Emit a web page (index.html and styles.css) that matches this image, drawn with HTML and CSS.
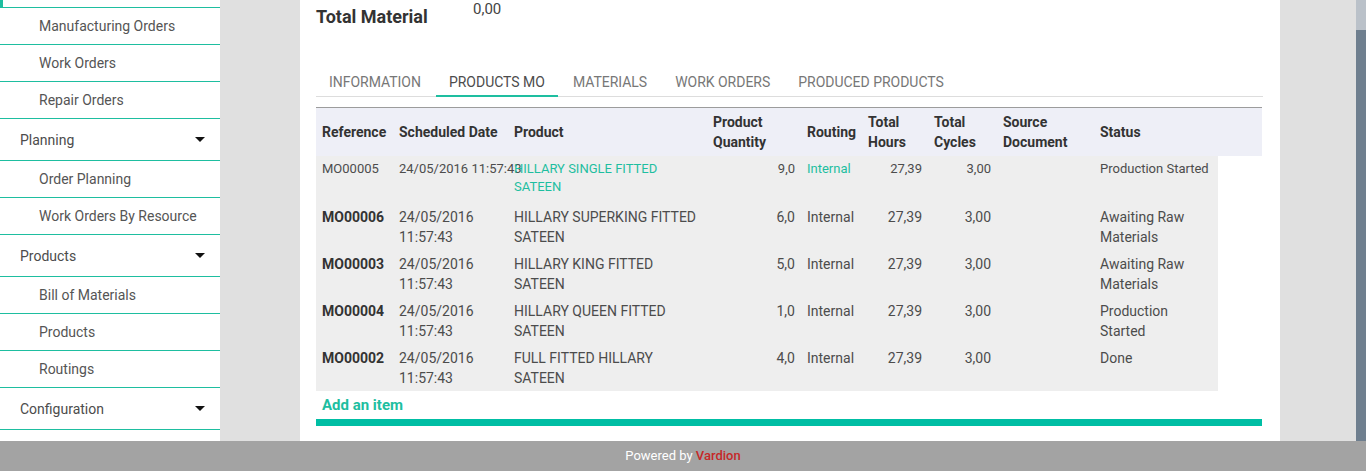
FILE: index.html
```html
<!DOCTYPE html>
<html>
<head>
<meta charset="utf-8">
<link rel="stylesheet" href="styles.css">
</head>
<body>
<div class="app">
  <div class="main">
    <nav class="sidebar">
      <div class="menu">
        <div class="item clipped"></div>
        <div class="item sub">Manufacturing Orders</div>
        <div class="item sub">Work Orders</div>
        <div class="item sub">Repair Orders</div>
        <div class="item top">Planning <span class="caret"></span></div>
        <div class="item sub">Order Planning</div>
        <div class="item sub">Work Orders By Resource</div>
        <div class="item top">Products <span class="caret"></span></div>
        <div class="item sub">Bill of Materials</div>
        <div class="item sub">Products</div>
        <div class="item sub">Routings</div>
        <div class="item top">Configuration <span class="caret"></span></div>
      </div>
    </nav>
    <div class="content">
      <div class="sheet">
        <div class="total">
          <div class="total-label">Total Material</div>
          <div class="total-value">0,00</div>
        </div>
        <div class="tabs">
          <div class="tab">INFORMATION</div>
          <div class="tab active">PRODUCTS MO</div>
          <div class="tab">MATERIALS</div>
          <div class="tab">WORK ORDERS</div>
          <div class="tab">PRODUCED PRODUCTS</div>
        </div>
        <div class="thead">
          <div class="th">Reference</div>
          <div class="th">Scheduled Date</div>
          <div class="th">Product</div>
          <div class="th">Product<br>Quantity</div>
          <div class="th">Routing</div>
          <div class="th">Total<br>Hours</div>
          <div class="th">Total<br>Cycles</div>
          <div class="th">Source<br>Document</div>
          <div class="th">Status</div>
        </div>
        <div class="tbody">
          <div class="row small">
            <div class="td">MO00005</div>
            <div class="td nowrap">24/05/2016 11:57:43</div>
            <div class="td link">HILLARY SINGLE FITTED SATEEN</div>
            <div class="td num">9,0</div>
            <div class="td link">Internal</div>
            <div class="td num">27,39</div>
            <div class="td num">3,00</div>
            <div class="td"></div>
            <div class="td nowrap">Production Started</div>
          </div>
          <div class="row">
            <div class="td ref">MO00006</div>
            <div class="td">24/05/2016 11:57:43</div>
            <div class="td">HILLARY SUPERKING FITTED SATEEN</div>
            <div class="td num">6,0</div>
            <div class="td">Internal</div>
            <div class="td num">27,39</div>
            <div class="td num">3,00</div>
            <div class="td"></div>
            <div class="td">Awaiting Raw Materials</div>
          </div>
          <div class="row">
            <div class="td ref">MO00003</div>
            <div class="td">24/05/2016 11:57:43</div>
            <div class="td">HILLARY KING FITTED SATEEN</div>
            <div class="td num">5,0</div>
            <div class="td">Internal</div>
            <div class="td num">27,39</div>
            <div class="td num">3,00</div>
            <div class="td"></div>
            <div class="td">Awaiting Raw Materials</div>
          </div>
          <div class="row">
            <div class="td ref">MO00004</div>
            <div class="td">24/05/2016 11:57:43</div>
            <div class="td">HILLARY QUEEN FITTED SATEEN</div>
            <div class="td num">1,0</div>
            <div class="td">Internal</div>
            <div class="td num">27,39</div>
            <div class="td num">3,00</div>
            <div class="td"></div>
            <div class="td">Production Started</div>
          </div>
          <div class="row">
            <div class="td ref">MO00002</div>
            <div class="td">24/05/2016 11:57:43</div>
            <div class="td">FULL FITTED HILLARY SATEEN</div>
            <div class="td num">4,0</div>
            <div class="td">Internal</div>
            <div class="td num">27,39</div>
            <div class="td num">3,00</div>
            <div class="td"></div>
            <div class="td">Done</div>
          </div>
        </div>
        <div class="add-item">Add an item</div>
        <div class="teal-bar"></div>
      </div>
      <div class="scrollbar"><div class="thumb"></div></div>
    </div>
  </div>
  <footer class="footer">Powered by <span class="brand">Vardion</span></footer>
</div>
</body>
</html>
```
FILE: styles.css
```css
* { box-sizing: border-box; }
html, body { margin: 0; padding: 0; }
body {
  font-family: Roboto, "Liberation Sans", sans-serif;
  font-size: 14px;
  color: #4c4c4c;
  width: 1366px;
  height: 471px;
  overflow: hidden;
}
.app { display: flex; flex-direction: column; height: 471px; }
.main { flex: 1; display: flex; min-height: 0; }

.sidebar {
  width: 220px;
  flex: none;
  background: #fff;
  overflow: hidden;
}
.menu { display: flex; flex-direction: column; }
.item {
  display: flex;
  align-items: center;
  justify-content: space-between;
  border-bottom: 1px solid #1ebea0;
  color: #555;
  font-size: 14px;
}
.item.clipped { height: 8px; border-left: 3px solid #1ebea0; }
.item.sub { height: 37px; padding-left: 39px; }
.item.top { height: 42px; padding-left: 20px; padding-right: 15px; color: #4c4c4c; }
.caret {
  width: 0; height: 0;
  border-left: 5px solid transparent;
  border-right: 5px solid transparent;
  border-top: 5px solid #111;
}

.content {
  flex: 1;
  display: flex;
  background: #e0e0e0;
  padding-left: 80px;
}
.sheet {
  width: 980px;
  background: #fff;
  padding: 0 17px 0 16px;
  margin-right: 76px;
}
.scrollbar {
  width: 10px;
  background: #6f7f8f;
  display: flex;
  flex-direction: column;
}
.thumb { height: 30px; background: #bac1c9; }

.total { display: flex; height: 28px; }
.total-label {
  width: 157px;
  font-size: 18px;
  font-weight: bold;
  color: #333;
  line-height: 22px;
  padding-top: 6px;
}
.total-value { font-size: 15px; line-height: 18px; color: #444; }

.tabs {
  display: flex;
  margin-top: 35px;
  border-bottom: 1px solid #ddd;
}
.tab {
  padding: 9px 13px 3px;
  line-height: 20px;
  border-bottom: 2px solid transparent;
  margin-bottom: -1px;
  margin-right: 2px;
  color: #777;
  font-size: 14px;
  letter-spacing: -0.02px;
}
.tab.active { border-bottom-color: #1ebea0; color: #4c4c4c; }

.thead, .row {
  display: grid;
  grid-template-columns: 77px 115px 199px 94px 61px 66px 69px 97px 1fr;
}
.thead {
  margin-top: 10px;
  width: 946px;
  height: 49px;
  border-top: 1px solid #9c9c9c;
  background: #eeeff7;
  align-items: center;
  font-weight: bold;
  color: #333;
  padding-bottom: 1px;
}
.th { padding: 0 6px; line-height: 20px; }
.tbody { width: 902px; background: #eee; }
.row { height: 47px; }
.td { padding: 4px 6px 0; line-height: 20px; }
.row.small .td { font-size: 13px; line-height: 18px; }
.nowrap { white-space: nowrap; }
.td.ref { font-weight: bold; color: #333; }
.td.num { text-align: right; }
.td.link { color: #1ebea0; }

.add-item {
  margin-top: 4px;
  padding: 0 6px;
  line-height: 20px;
  font-size: 15px;
  font-weight: bold;
  color: #1ebea0;
}
.teal-bar {
  margin-top: 4px;
  width: 946px;
  height: 7px;
  background: #00bea4;
}

.footer {
  height: 30px;
  flex: none;
  background: #a3a3a3;
  color: #fff;
  text-align: center;
  font-size: 13px;
  line-height: 30px;
}
.brand { color: #c62828; font-weight: 500; }
```
